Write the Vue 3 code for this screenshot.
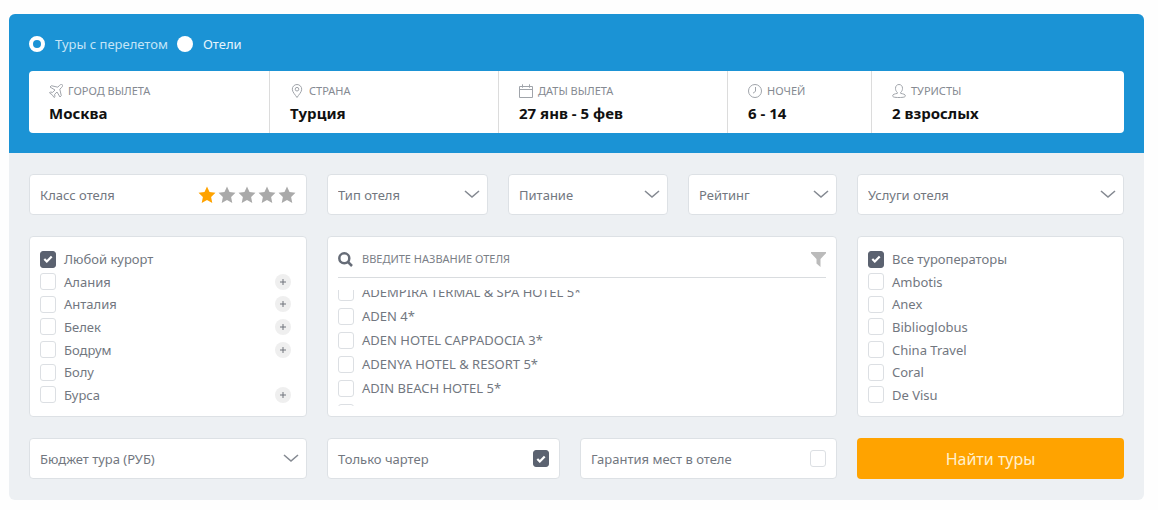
<script setup>
import { onMounted, ref } from 'vue'

const mode = ref('tours')
const segments = [
  { icon: 'plane', label: 'ГОРОД ВЫЛЕТА', value: 'Москва' },
  { icon: 'pin', label: 'СТРАНА', value: 'Турция' },
  { icon: 'calendar', label: 'ДАТЫ ВЫЛЕТА', value: '27 янв - 5 фев' },
  { icon: 'clock', label: 'НОЧЕЙ', value: '6 - 14' },
  { icon: 'person', label: 'ТУРИСТЫ', value: '2 взрослых' },
]
const stars = ref(1)
const selects = ['Тип отеля', 'Питание', 'Рейтинг']
const resorts = ref([
  { name: 'Любой курорт', checked: true },
  { name: 'Алания', nested: true },
  { name: 'Анталия', nested: true },
  { name: 'Белек', nested: true },
  { name: 'Бодрум', nested: true },
  { name: 'Болу' },
  { name: 'Бурса', nested: true },
])
const hotels = ref([
  { name: 'ADEMPIRA TERMAL & SPA HOTEL 5*' },
  { name: 'ADEN 4*' },
  { name: 'ADEN HOTEL CAPPADOCIA 3*' },
  { name: 'ADENYA HOTEL & RESORT 5*' },
  { name: 'ADIN BEACH HOTEL 5*' },
  { name: 'ADONIS HOTEL 5*' },
])
const operators = ref([
  { name: 'Все туроператоры', checked: true },
  { name: 'Ambotis' },
  { name: 'Anex' },
  { name: 'Biblioglobus' },
  { name: 'China Travel' },
  { name: 'Coral' },
  { name: 'De Visu' },
])
const charter = ref(true)
const guarantee = ref(false)
const hotelList = ref(null)

onMounted(() => {
  hotelList.value.scrollTop = 10
})
</script>

<template>
  <form class="search" @submit.prevent>
    <header class="top">
      <div class="modes">
        <label class="mode muted"><input v-model="mode" type="radio" name="mode" value="tours" />Туры с перелетом</label>
        <label class="mode"><input v-model="mode" type="radio" name="mode" value="hotels" />Отели</label>
      </div>
      <div class="segments">
        <button v-for="s in segments" :key="s.icon" type="button" class="segment">
          <span class="caption">
            <svg class="line-icon" viewBox="0 0 14 14" width="14" height="14" aria-hidden="true">
              <path v-if="s.icon === 'plane'" d="M13.300.7c-.7-.6-1.900-.2-2.600.5L8.800 3.200 2.300 1.700 1 3l5 3-2.300 2.400-2.400-.4-.8.900 2.700 1.900 1.900 2.700.9-.8-.4-2.400L8 8l3 5 1.300-1.300-1.500-6.500 2-1.900c.7-.7 1.100-1.900.5-2.600z" />
              <g v-else-if="s.icon === 'pin'">
                <path d="M7 13.500C5.200 10.700 2.300 8 2.300 5.200a4.700 4.700 0 0 1 9.400 0C11.700 8 8.800 10.700 7 13.500z" />
                <circle cx="7" cy="5.200" r="1.800" />
              </g>
              <path v-else-if="s.icon === 'calendar'" d="M.5 2.500h13v11H.5zM.5 5.500h13M3.500.3v3.400M10.500.3v3.400" />
              <g v-else-if="s.icon === 'clock'">
                <circle cx="7" cy="7" r="6.500" />
                <path d="M7.500 3v4.300L5 9.200" />
              </g>
              <path v-else d="M5.300 9.400V8.300C4.100 7.500 3.500 6 3.500 4.300 3.500 2 5 .5 7 .5s3.500 1.500 3.500 3.800c0 1.700-.6 3.200-1.800 4v1.100c2.300.4 4.700 1 4.700 2.400 0 1.200-1.700 1.700-6.400 1.700S.6 13 .6 11.800c0-1.400 2.400-2 4.700-2.400z" />
            </svg>
            {{ s.label }}
          </span>
          <span class="value">{{ s.value }}</span>
        </button>
      </div>
    </header>

    <div class="filters">
      <div class="box field">
        <span>Класс отеля</span>
        <span class="stars">
          <button v-for="n in 5" :key="n" type="button" class="star" :class="{ on: n <= stars }" :aria-label="`${n}*`" @click="stars = n">
            <svg viewBox="0 0 18 18" width="18" height="18" aria-hidden="true"><path d="M9 .6l2.500 5.500 6 .7-4.400 4.100 1.200 6.200L9 14.100l-5.300 3 1.200-6.200L.5 6.800l6-.7z" /></svg>
          </button>
        </span>
      </div>

      <div class="trio">
        <div v-for="name in selects" :key="name" class="box picker">
          <select :aria-label="name"><option>{{ name }}</option></select>
          <svg class="chevron" viewBox="0 0 16 9" width="16" height="9" aria-hidden="true"><path d="M1 1l7 6L15 1" /></svg>
        </div>
      </div>

      <div class="box picker">
        <select aria-label="Услуги отеля"><option>Услуги отеля</option></select>
        <svg class="chevron" viewBox="0 0 16 9" width="16" height="9" aria-hidden="true"><path d="M1 1l7 6L15 1" /></svg>
      </div>

      <ul class="box panel">
        <li v-for="r in resorts" :key="r.name" class="row">
          <label class="option"><input v-model="r.checked" type="checkbox" />{{ r.name }}</label>
          <button v-if="r.nested" type="button" class="plus" :aria-label="r.name">
            <svg viewBox="0 0 8 8" width="8" height="8" aria-hidden="true"><path d="M4 1v6M1 4h6" /></svg>
          </button>
        </li>
      </ul>

      <div class="box hotels">
        <div class="find">
          <svg viewBox="0 0 15 15" width="15" height="15" aria-hidden="true"><circle cx="6.300" cy="6.300" r="5" /><path d="M10 10l4 4" /></svg>
          <input type="text" placeholder="ВВЕДИТЕ НАЗВАНИЕ ОТЕЛЯ" aria-label="ВВЕДИТЕ НАЗВАНИЕ ОТЕЛЯ" />
          <svg class="funnel" viewBox="0 0 15 15" width="15" height="15" aria-hidden="true"><path d="M0 0h15v1.200L9.500 7v8L5.500 11.500V7L0 1.200z" /></svg>
        </div>
        <ul ref="hotelList" class="hotel-list">
          <li v-for="h in hotels" :key="h.name">
            <label class="option"><input v-model="h.checked" type="checkbox" />{{ h.name }}</label>
          </li>
        </ul>
      </div>

      <ul class="box panel">
        <li v-for="o in operators" :key="o.name" class="row">
          <label class="option"><input v-model="o.checked" type="checkbox" />{{ o.name }}</label>
        </li>
      </ul>

      <div class="box picker">
        <select aria-label="Бюджет тура (РУБ)"><option>Бюджет тура (РУБ)</option></select>
        <svg class="chevron" viewBox="0 0 16 9" width="16" height="9" aria-hidden="true"><path d="M1 1l7 6L15 1" /></svg>
      </div>

      <div class="duo">
        <label class="box field">Только чартер<input v-model="charter" type="checkbox" /></label>
        <label class="box field">Гарантия мест в отеле<input v-model="guarantee" type="checkbox" /></label>
      </div>

      <button type="submit" class="submit">Найти туры</button>
    </div>
  </form>
</template>

<style>
body {
  background: #fefefe;
}
</style>

<style scoped>
.search {
  margin: 14px 14px 10px 9px;
  border-radius: 6px;
  overflow: hidden;
  background: #edf0f3;
  color: #72777f;
  font: 13px/18px "Noto Sans", "Open Sans", sans-serif;
}
.search * {
  box-sizing: border-box;
}
button,
input,
select {
  margin: 0;
  padding: 0;
  border: 0;
  background: none;
  color: inherit;
  font: inherit;
}
button {
  cursor: pointer;
}
ul {
  margin: 0;
  padding: 0;
  list-style: none;
}
svg {
  display: block;
  flex: none;
  fill: none;
}
.top {
  padding: 21px 20px 20px;
  background: #1b93d5;
}
.modes {
  display: flex;
  gap: 9px;
  margin-bottom: 18px;
}
.mode {
  display: flex;
  align-items: center;
  gap: 10px;
  color: #e6f4fc;
}
.muted {
  color: #c5e5f7;
}
.mode input {
  appearance: none;
  width: 16px;
  height: 16px;
  border-radius: 50%;
  background: #fff;
}
.mode input:checked {
  border: 4px solid #fff;
  background: #1b93d5;
}
.segments {
  display: grid;
  grid-template-columns: 240fr 229fr 229fr 144fr 253fr;
  border-radius: 4px;
  overflow: hidden;
  background: #fff;
}
.segment {
  display: flex;
  flex-direction: column;
  gap: 3px;
  padding: 11px 20px 10px;
  border-left: 1px solid #dcdcdc;
  text-align: left;
}
.segment:first-child {
  border-left: 0;
}
.caption {
  display: flex;
  align-items: center;
  gap: 5px;
  color: #858a92;
  font-size: 11px;
  white-space: nowrap;
}
.line-icon {
  stroke: #a0a4aa;
  stroke-width: 1;
}
.value {
  color: #111;
  font-size: 15px;
  font-weight: 700;
  line-height: 20px;
}
.filters {
  display: grid;
  grid-template-columns: 278fr 510fr 267fr;
  gap: 21px 20px;
  padding: 21px 20px;
}
.trio,
.duo {
  display: grid;
  gap: 20px;
}
.trio {
  grid-template-columns: 161fr 160fr 149fr;
}
.duo {
  grid-template-columns: 233fr 257fr;
}
.box {
  border: 1px solid #dde1e5;
  border-radius: 4px;
  background: #fff;
}
.field {
  display: flex;
  align-items: center;
  justify-content: space-between;
  min-height: 41px;
  padding: 0 10px;
}
.stars {
  display: flex;
  gap: 2px;
}
.star svg {
  fill: #aaa;
}
.star.on svg {
  fill: #ffa300;
}
.picker {
  display: grid;
  align-items: center;
  min-height: 41px;
}
.picker select,
.chevron {
  grid-area: 1 / 1;
}
.picker select {
  appearance: none;
  width: 100%;
  height: 100%;
  padding: 0 32px 0 10px;
}
.chevron {
  justify-self: end;
  margin-right: 7px;
  stroke: #858a92;
  stroke-width: 1.600;
  pointer-events: none;
}
.panel {
  display: flex;
  flex-direction: column;
  justify-content: space-between;
  min-height: 181px;
  padding: 13px 15px 12px 10px;
}
.row {
  display: flex;
  align-items: center;
  justify-content: space-between;
}
.option {
  display: flex;
  align-items: center;
  gap: 8px;
}
input[type="checkbox"] {
  appearance: none;
  flex: none;
  width: 16px;
  height: 17px;
  border: 1px solid #dcdfe3;
  border-radius: 3px;
  background: #fff;
}
input[type="checkbox"]:checked {
  border-color: #5b6270;
  background: #5b6270 url("data:image/svg+xml,%3Csvg xmlns='http://www.w3.org/2000/svg' viewBox='0 0 10 8'%3E%3Cpath d='M1.300 4l2.500 2.500L8.700 1.500' fill='none' stroke='white' stroke-width='2.200'/%3E%3C/svg%3E") center / 10px 8px no-repeat;
}
.plus {
  display: grid;
  place-items: center;
  width: 16px;
  height: 16px;
  border-radius: 50%;
  background: #efefef;
}
.plus svg {
  stroke: #70757c;
}
.hotels {
  padding: 13px 10px 10px;
}
.find {
  display: flex;
  align-items: center;
  gap: 9px;
  padding-bottom: 9px;
  border-bottom: 1px solid #d9dcdf;
}
.find svg {
  stroke: #666c77;
  stroke-width: 2.500;
}
.find .funnel {
  fill: #bbb;
  stroke: none;
}
.find input {
  flex: 1;
  min-width: 0;
  font-size: 11px;
  outline: 0;
}
.find input::placeholder {
  color: #7b8087;
  opacity: 1;
}
.hotel-list {
  height: 116px;
  margin-top: 12px;
  overflow-y: auto;
  scrollbar-width: none;
}
.hotel-list .option {
  min-height: 24px;
}
.submit {
  min-height: 41px;
  border-radius: 4px;
  background: #ffa300;
  color: #fff0cc;
  font-size: 16px;
}
</style>
